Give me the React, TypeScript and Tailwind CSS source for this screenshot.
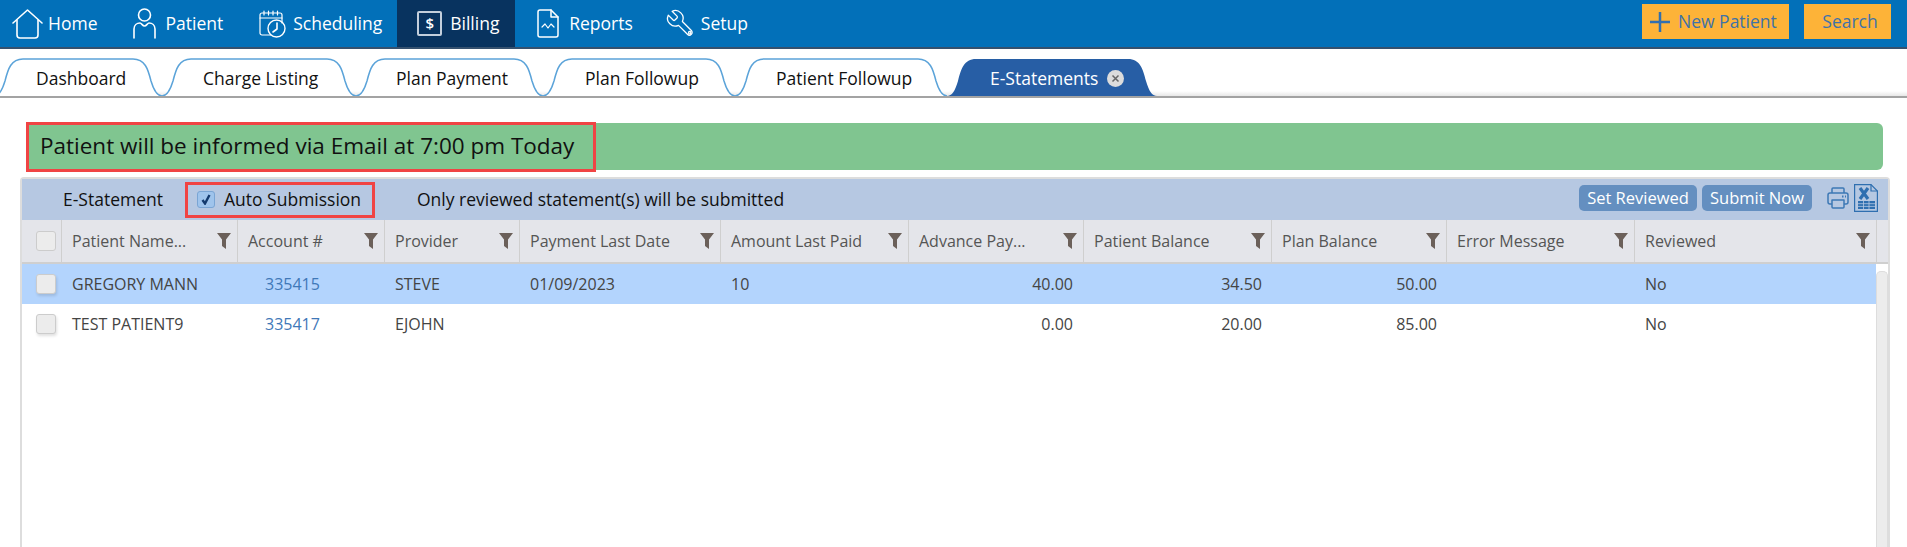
import React from 'react'

const HomeIcon = () => (
  <svg width="31" height="30" viewBox="0 0 31 30" fill="none" stroke="white" strokeWidth="1.6" strokeLinecap="round" strokeLinejoin="round">
    <path d="M1 14 15.5 1 30 14" />
    <path d="M5 11v15a3 3 0 0 0 3 3h15a3 3 0 0 0 3-3V11" />
  </svg>
)

const PatientIcon = () => (
  <svg width="23" height="31" viewBox="0 0 23 31" fill="none" stroke="white" strokeWidth="1.6" strokeLinecap="round" strokeLinejoin="round">
    <circle cx="11.5" cy="7" r="6" />
    <path d="M1 30v-9c0-4 3-6 6-6 1.500 0 2.500 3 4.500 3s3-3 4.500-3c3 0 6 2 6 6v9" />
  </svg>
)

const SchedulingIcon = () => (
  <svg width="27" height="28" viewBox="0 0 27 28" fill="none" stroke="white" strokeWidth="1.2" strokeLinecap="round" strokeLinejoin="round">
    <path d="M12 25H3a2 2 0 0 1-2-2V5a2 2 0 0 1 2-2h18a2 2 0 0 1 2 2v8" />
    <path d="M1 8h22" />
    <path d="M5 1v4M9.500 1v4M14 1v4M18.500 1v4" />
    <circle cx="17.500" cy="18.500" r="8.500" strokeWidth="1.400" />
    <path d="M18 13v6l-4 3" strokeWidth="1.600" />
  </svg>
)

const BillingIcon = () => (
  <div className="flex h-[25px] w-[25px] items-center justify-center rounded-[2px] border-2 border-[#c3cfdc] text-[15px] font-semibold text-white">
    $
  </div>
)

const ReportsIcon = () => (
  <svg width="22" height="29" viewBox="0 0 22 29" fill="none" stroke="white" strokeWidth="1.500" strokeLinecap="round" strokeLinejoin="round">
    <path d="M14 1H3a2 2 0 0 0-2 2v23a2 2 0 0 0 2 2h16a2 2 0 0 0 2-2V8z" />
    <path d="M14 1v7h7" />
    <path d="M5 18l3-3 3 4 3-4 3 3" strokeWidth="1.200" />
  </svg>
)

const SetupIcon = () => (
  <svg width="31" height="31" viewBox="0 0 24 24" fill="none" stroke="white" strokeWidth="1" strokeLinecap="round" strokeLinejoin="round">
    <g transform="translate(24 0) scale(-1 1)">
      <path d="M14.700 6.300a1 1 0 0 0 0 1.400l1.600 1.600a1 1 0 0 0 1.400 0l3.770-3.770a6 6 0 0 1-7.940 7.940l-6.910 6.910a2.120 2.120 0 0 1-3-3l6.910-6.910a6 6 0 0 1 7.940-7.940l-3.760 3.760z" />
      <circle cx="4.900" cy="19.100" r="0.900" />
    </g>
  </svg>
)

const PlusIcon = () => (
  <svg width="20" height="20" viewBox="0 0 20 20">
    <path d="M0 10h20M10 0v20" stroke="#2f6fb0" strokeWidth="2.500" />
  </svg>
)

const FilterIcon = () => (
  <svg width="14" height="16" viewBox="0 0 14 16" className="shrink-0">
    <path d="M0 0h14L9 6.500V16L5 13V6.500z" fill="#6b605a" />
  </svg>
)

const PrinterIcon = () => (
  <svg width="22" height="22" viewBox="0 0 22 22" fill="none" stroke="#3d78b5" strokeWidth="1.500" strokeLinejoin="round">
    <path d="M5 6V2a1 1 0 0 1 1-1h10a1 1 0 0 1 1 1v4" />
    <path d="M5 17H3a2 2 0 0 1-2-2V8a2 2 0 0 1 2-2h16a2 2 0 0 1 2 2v7a2 2 0 0 1-2 2h-2" />
    <path d="M5 13h12v7a1 1 0 0 1-1 1H6a1 1 0 0 1-1-1z" />
    <path d="M15 9.500h1.500M18 9.500h1" strokeWidth="2" />
  </svg>
)

const ExcelIcon = () => (
  <svg width="24" height="28" viewBox="0 0 24 28" fill="none" stroke="#2f6fb0" strokeWidth="1.200">
    <path d="M.6.600h16.400l6.400 6.400v20.400H.6z" />
    <path d="M17 .600V7h6.400" />
    <path d="M6 4l8 11M14 4 6 15" strokeWidth="3.200" />
    <path d="M4 17h17v8H4z" fill="#2f6fb0" stroke="none" />
    <path d="M4 19.700h17M4 22.400h17M9.500 17v8M15 17v8" stroke="#b6c8e2" strokeWidth="0.800" />
  </svg>
)

const CloseIcon = () => (
  <svg width="17" height="17" viewBox="0 0 17 17">
    <circle cx="8.500" cy="8.500" r="8.500" fill="#dcdcdc" />
    <path d="M5.500 5.500l6 6M11.500 5.500l-6 6" stroke="#666" strokeWidth="1.500" />
  </svg>
)

const tabPath = (w: number, h: number) =>
  `M0 ${h} C5 ${h} 8 ${h - 5} 11 ${h - 15} C14 ${h - 27} 17 2 29 2 L${w - 29} 2 C${w - 17} 2 ${w - 14} ${h - 27} ${w - 11} ${h - 15} C${w - 8} ${h - 5} ${w - 5} ${h} ${w} ${h}`

const Tab = ({ label, width, pad, active }: { label: string; width: number; pad: string; active?: boolean }) => (
  <div className={`relative flex h-[39px] shrink-0 items-center pt-[3px] ${pad}`} style={{ width }}>
    <svg width={width} height="39" className="absolute left-0 top-0">
      {active ? (
        <path d={tabPath(width, 39) + ' Z'} fill="#275ea5" />
      ) : (
        <path d={tabPath(width, 39)} fill="white" stroke="#5ba3d9" strokeWidth="1.500" />
      )}
    </svg>
    <span className={`relative text-[17.5px] ${active ? 'text-white' : 'text-[#111]'}`}>{label}</span>
    {active && (
      <span className="relative ml-[9px] flex">
        <CloseIcon />
      </span>
    )}
  </div>
)

const columns = [
  { label: 'Patient Name...' },
  { label: 'Account #' },
  { label: 'Provider' },
  { label: 'Payment Last Date' },
  { label: 'Amount Last Paid' },
  { label: 'Advance Pay...' },
  { label: 'Patient Balance' },
  { label: 'Plan Balance' },
  { label: 'Error Message' },
  { label: 'Reviewed' },
]

const rows = [
  { name: 'GREGORY MANN', account: '335415', provider: 'STEVE', date: '01/09/2023', paid: '10', advance: '40.00', balance: '34.50', plan: '50.00', reviewed: 'No' },
  { name: 'TEST PATIENT9', account: '335417', provider: 'EJOHN', date: '', paid: '', advance: '0.00', balance: '20.00', plan: '85.00', reviewed: 'No' },
]

const gridCols = 'grid grid-cols-[40px_176px_147px_135px_201px_188px_175px_188px_175px_188px_242px]'

const App = () => {
  return (
    <div className="h-[547px] w-full overflow-hidden bg-white font-['Open_Sans',sans-serif]">
      <header className="flex h-[49px] items-stretch border-b-2 border-[#35516f] bg-[#0270b9] text-[17.5px] text-white">
        <div className="flex items-center gap-[5px] pl-[12px]"><HomeIcon /><span>Home</span></div>
        <div className="ml-[36px] flex items-center gap-[9px]"><PatientIcon /><span>Patient</span></div>
        <div className="ml-[36px] flex items-center gap-[7px]"><SchedulingIcon /><span>Scheduling</span></div>
        <div className="ml-[15px] flex w-[118px] items-center gap-[8px] bg-[#08335f] pl-[20px]"><BillingIcon /><span>Billing</span></div>
        <div className="ml-[22px] flex items-center gap-[10px]"><ReportsIcon /><span>Reports</span></div>
        <div className="ml-[32px] flex items-center gap-[5px]"><SetupIcon /><span>Setup</span></div>
        <div className="ml-auto flex items-start gap-[15px] pr-[16px] pt-[4px] text-[#3f72a8]">
          <button className="flex h-[35px] w-[147px] items-center gap-[8px] bg-[#fdb338] pl-[8px]"><PlusIcon /><span>New Patient</span></button>
          <button className="h-[35px] w-[87px] bg-[#fdb338] pl-[5px]">Search</button>
        </div>
      </header>

      <nav className="relative flex h-[49px] items-end overflow-hidden border-b-2 border-[#a3a3a3] pl-0">
        <div className="absolute bottom-0 left-0 h-[5px] w-full bg-gradient-to-b from-white to-[#e8e8e8]" />
        <div className="ml-[-6px] flex">
          <Tab label="Dashboard" width={168} pad="pl-[42px]" />
          <Tab label="Charge Listing" width={194} pad="pl-[41px]" />
          <Tab label="Plan Payment" width={187} pad="pl-[40px]" />
          <Tab label="Plan Followup" width={192} pad="pl-[42px]" />
          <Tab label="Patient Followup" width={212} pad="pl-[41px]" />
          <Tab label="E-Statements" width={210} pad="pl-[43px]" active />
        </div>
      </nav>

      <main className="pl-[20px] pr-[17px] pt-[25px]">
        <div className="ml-[6px] mr-[7px] flex h-[47px] items-center rounded-r-[6px] bg-[#80c590]">
          <div className="flex h-[50px] w-[570px] items-center border-[3px] border-[#f04444] pb-[2px] pl-[11px] text-[22.5px] text-[#111]">
            Patient will be informed via Email at 7:00 pm Today
          </div>
        </div>

        <section className="mt-[7px] h-[400px] rounded-t-[4px] border-x-2 border-t-2 border-[#dddddd]">
          <div className="flex h-[41px] items-center bg-[#b6c8e2] pl-[41px] pr-[10px] text-[17.5px] font-medium text-[#111]">
            <span>E-Statement</span>
            <label className="ml-[22px] flex h-[36px] w-[190px] items-center border-[3px] border-[#f04444] pl-[9px]">
              <span className="flex h-[17px] w-[18px] items-center justify-center rounded-[3px] border border-[#7aa5d4] bg-[#9fc4ec]">
                <svg width="10" height="11" viewBox="0 0 10 11" fill="none">
                  <path d="M1.500 6l2.500 3.500L8.500 1" stroke="#143a6e" strokeWidth="2.400" />
                </svg>
              </span>
              <span className="ml-[9px]">Auto Submission</span>
            </label>
            <span className="ml-[42px]">Only reviewed statement(s) will be submitted</span>
            <div className="ml-auto mb-[3px] flex items-center">
              <button className="h-[26px] w-[118px] rounded-[5px] bg-[#648fc0] text-[16.5px] font-normal text-white">Set Reviewed</button>
              <button className="ml-[5px] h-[26px] w-[110px] rounded-[5px] bg-[#648fc0] text-[16.5px] font-normal text-white">Submit Now</button>
              <span className="ml-[15px] flex"><PrinterIcon /></span>
              <span className="ml-[5px] flex"><ExcelIcon /></span>
            </div>
          </div>

          <div className={`${gridCols} h-[44px] border-b-2 border-[#cfcfcf] bg-[#e4e5ea] text-[16px] text-[#555]`}>
            <div className="flex items-center justify-center border-r border-[#cfcfcf]">
              <span className="ml-[8px] h-[20px] w-[20px] rounded-[3px] border border-[#cccccc] bg-[#ececec]" />
            </div>
            {columns.map((c) => (
              <div key={c.label} className="flex items-center justify-between border-r border-[#cfcfcf] pl-[10px] pr-[6px]">
                <span>{c.label}</span>
                <FilterIcon />
              </div>
            ))}
          </div>

          <div className="flex">
            <div className="w-[1854px] text-[16px] text-[#444]">
              {rows.map((r, i) => (
                <div key={r.account} className={`${gridCols} h-[40px] items-center pb-[1px] ${i === 0 ? 'bg-[#b3d4fd]' : 'bg-white'}`}>
                  <div className="flex justify-center">
                    <span className="ml-[8px] h-[20px] w-[20px] rounded-[3px] border border-[#cccccc] bg-[#ececec] shadow-[1px_2px_3px_rgba(0,0,0,0.12)]" />
                  </div>
                  <div className="pl-[10px]">{r.name}</div>
                  <div className="pl-[27px] text-[#3f78b8]">{r.account}</div>
                  <div className="pl-[10px]">{r.provider}</div>
                  <div className="pl-[10px]">{r.date}</div>
                  <div className="pl-[10px]">{r.paid}</div>
                  <div className="pr-[11px] text-right">{r.advance}</div>
                  <div className="pr-[10px] text-right">{r.balance}</div>
                  <div className="pr-[10px] text-right">{r.plan}</div>
                  <div />
                  <div className="pl-[10px]">{r.reviewed}</div>
                </div>
              ))}
            </div>
            <div className="mt-[7px] h-[300px] w-[12px] rounded-t-[5px] border-x border-t border-[#dddddd] bg-[#ececec]" />
          </div>
        </section>
      </main>
    </div>
  )
}

export default App
